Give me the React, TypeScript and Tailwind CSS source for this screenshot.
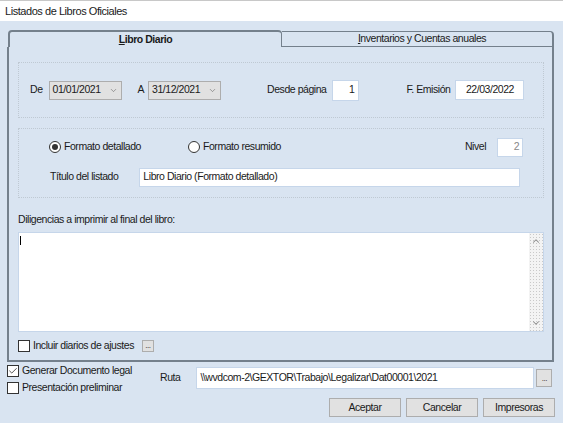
import { Check, ChevronDown, ChevronUp } from 'lucide-react';

function Combo({ value }: { value: string }) {
  return (
    <div className="flex items-center justify-between w-[73px] h-[19px] bg-[#e1e1e1] border border-[#adadad] pl-[3px] pr-[3px]">
      <span>{value}</span>
      <ChevronDown className="w-[9px] h-[9px] text-[#606060]" strokeWidth={1.5} />
    </div>
  );
}

function Radio({ checked }: { checked?: boolean }) {
  return (
    <span className="flex items-center justify-center w-[12px] h-[12px] rounded-full border border-[#333] bg-white">
      {checked && <span className="w-[6px] h-[6px] rounded-full bg-[#333]" />}
    </span>
  );
}

function Box({ checked }: { checked?: boolean }) {
  return (
    <span className="flex items-center justify-center w-[12px] h-[12px] border border-[#333] bg-white">
      {checked && <Check className="w-[10px] h-[10px] text-[#333]" strokeWidth={2} />}
    </span>
  );
}

function Button({ label }: { label: string }) {
  return (
    <button className="w-[72px] h-[19px] bg-[#e1e1e1] border border-[#adadad] flex items-center justify-center">
      {label}
    </button>
  );
}

export default function App() {
  return (
    <div className="w-[563px] h-[423px] bg-[#d9e4f1] text-[#1a1a1a] font-['Liberation_Sans',Arial,sans-serif] text-[10.5px] tracking-[-0.45px] whitespace-nowrap flex flex-col overflow-hidden">
      <div className="h-[21px] bg-white border-t border-[#c8c8c8] flex items-center pl-[5px] text-[11px]">
        Listados de Libros Oficiales
      </div>

      {/* tabs */}
      <div className="flex items-end pl-[8px] mt-[9px] h-[17px]">
        <div className="w-[274px] h-[17px] border-t-2 border-l-2 border-r border-[#74808c] rounded-t-[4px] flex items-center justify-center font-bold bg-[#d9e4f1]">
          <span><span className="underline">L</span>ibro Diario</span>
        </div>
        <div className="w-[272px] h-[16px] border-t border-r-2 border-b border-[#74808c] rounded-tr-[4px] flex items-center justify-center pl-[10px]">
          <span><span className="underline">I</span>nventarios y Cuentas anuales</span>
        </div>
      </div>

      {/* panel */}
      <div className="ml-[7px] w-[547px] h-[315px] border-l-2 border-r-2 border-b-2 border-[#74808c] pl-[9px] pt-[15px] flex flex-col">
        <div className="w-[526px] h-[56px] border border-dotted border-[#bfc9d3] flex items-center pl-[11px]">
          <span>De</span>
          <div className="ml-[6px]"><Combo value="01/01/2021" /></div>
          <span className="ml-[16px]">A</span>
          <div className="ml-[4px]"><Combo value="31/12/2021" /></div>
          <span className="ml-[46px]">Desde página</span>
          <div className="ml-[5px] w-[27px] h-[21px] bg-white border border-[#c6d6ea] flex items-center justify-end pr-[3px]">1</div>
          <span className="ml-[48px]">F. Emisión</span>
          <div className="ml-[5px] w-[69px] h-[20px] bg-white border border-[#c6d6ea] flex items-center justify-center">22/03/2022</div>
        </div>

        <div className="mt-[10px] w-[526px] h-[70px] border border-dotted border-[#bfc9d3] flex flex-col pl-[30px] pt-[8px]">
          <div className="flex items-center h-[20px]">
            <Radio checked />
            <span className="ml-[3px]">Formato detallado</span>
            <div className="ml-[47px]"><Radio /></div>
            <span className="ml-[3px]">Formato resumido</span>
            <span className="ml-[184px]">Nivel</span>
            <div className="ml-[11px] w-[26px] h-[19px] bg-white border border-[#c6d6ea] flex items-center justify-end pr-[3px] text-[#888]">2</div>
          </div>
          <div className="flex items-center h-[20px] mt-[10px]">
            <span className="ml-[1px]">Título del listado</span>
            <div className="ml-[21px] w-[381px] h-[19px] bg-white border border-[#c6d6ea] flex items-center pl-[3px]">Libro Diario (Formato detallado)</div>
          </div>
        </div>

        <div className="mt-[15px] h-[12px] leading-[12px]">Diligencias a imprimir al final del libro:</div>

        <div className="mt-[7px] w-[526px] h-[100px] bg-white border border-[#c6d6ea] flex">
          <div className="flex-1 pt-[3px] pl-[1px]">
            <div className="w-[1px] h-[9px] bg-black" />
          </div>
          <div className="w-[14px] h-full bg-[#f3f3f3] bg-[radial-gradient(#c9c9c9_0.6px,transparent_0.7px)] bg-[length:3px_3px] flex flex-col items-center justify-between py-[3px]">
            <ChevronUp className="w-[10px] h-[10px] text-[#8a8a8a]" strokeWidth={2.5} />
            <ChevronDown className="w-[10px] h-[10px] text-[#8a8a8a]" strokeWidth={2.5} />
          </div>
        </div>

        <div className="mt-[6px] flex items-center h-[16px]">
          <Box />
          <span className="ml-[3px]">Incluir diarios de ajustes</span>
          <span className="ml-[8px] w-[12px] h-[12px] bg-[#e1e1e1] border border-[#adadad] flex items-end justify-center text-[8px] leading-[8px] pb-[1px]">...</span>
        </div>
      </div>

      {/* bottom */}
      <div className="flex pl-[7px] mt-[3px]">
        <div className="w-[146px] flex flex-col gap-[5px]">
          <div className="flex items-center h-[12px]">
            <Box checked />
            <span className="ml-[3px]">Generar Documento legal</span>
          </div>
          <div className="flex items-center h-[12px]">
            <Box />
            <span className="ml-[3px]">Presentación preliminar</span>
          </div>
        </div>
        <div className="flex items-center ml-[7px] h-[22px] mt-[2px]">
          <span>Ruta</span>
          <div className="ml-[16px] w-[338px] h-[22px] bg-white border border-[#c6d6ea] flex items-center pl-[3px]">\\wvdcom-2\GEXTOR\Trabajo\Legalizar\Dat00001\2021</div>
          <span className="ml-[2px] w-[16px] h-[18px] bg-[#e1e1e1] border border-[#adadad] flex items-end justify-center text-[8px] leading-[8px] pb-[3px]">...</span>
        </div>
      </div>

      <div className="flex justify-end gap-[5px] pr-[8px] mt-[4px]">
        <Button label="Aceptar" />
        <Button label="Cancelar" />
        <Button label="Impresoras" />
      </div>
    </div>
  );
}
